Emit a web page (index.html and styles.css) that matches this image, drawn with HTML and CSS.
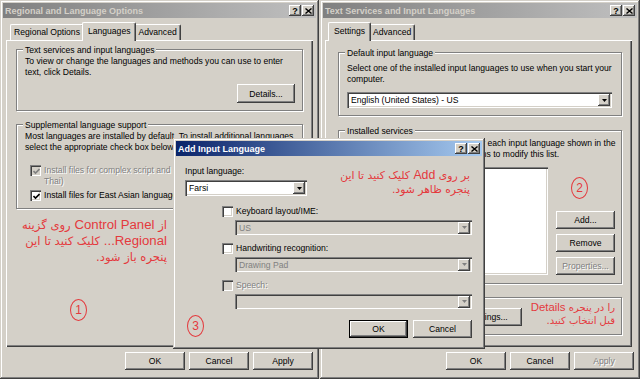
FILE: index.html
```html
<!DOCTYPE html>
<html lang="en">
<head>
    <meta charset="UTF-8">
    <title>Regional and Language Options</title>
    <link rel="stylesheet" href="styles.css">
</head>
<body>
<div class="desk">
    <div class="win win-left">
        <div class="title off">
            <span>Regional and Language Options</span>
            <span class="caps"><span class="cap">?</span><span class="cap"><svg width="7" height="6" viewBox="0 0 7 6"><path d="M0.5 0.5 L6.5 5.5 M6.5 0.5 L0.5 5.5" stroke="#000" stroke-width="1.4"/></svg></span></span>
        </div>
        <div class="tabs">
            <span class="tab">Regional Options</span>
            <span class="tab sel">Languages</span>
            <span class="tab">Advanced</span>
        </div>
        <div class="panel panel-left">
            <div class="group g-text">
                <div class="legend">Text services and input languages</div>
                <p class="txt">To view or change the languages and methods you can use to enter<br>text, click Details.</p>
                <div class="act"><span class="btn btn-details">Details...</span></div>
            </div>
            <div class="group g-supp">
                <div class="legend">Supplemental language support</div>
                <p class="txt">Most languages are installed by default. To install additional languages,<br>select the appropriate check box below.</p>
                <div class="chk dis chk-complex"><span class="box on"><svg width="7" height="7" viewBox="0 0 7 7"><path d="M0.5 3 L2.5 5 L6.5 1" stroke="#808080" stroke-width="1.6" fill="none"/></svg></span><span>Install files for complex script and right-to-left languages (including<br>Thai)</span></div>
                <div class="chk chk-asian"><span class="box on"><svg width="7" height="7" viewBox="0 0 7 7"><path d="M0.5 3 L2.5 5 L6.5 1" stroke="#000" stroke-width="1.6" fill="none"/></svg></span><span>Install files for East Asian languages</span></div>
            </div>
        </div>
        <div class="btnrow">
            <span class="btn">OK</span>
            <span class="btn">Cancel</span>
            <span class="btn">Apply</span>
        </div>
    </div>

    <div class="win win-right">
        <div class="title off">
            <span>Text Services and Input Languages</span>
            <span class="caps"><span class="cap">?</span><span class="cap"><svg width="7" height="6" viewBox="0 0 7 6"><path d="M0.5 0.5 L6.5 5.5 M6.5 0.5 L0.5 5.5" stroke="#000" stroke-width="1.4"/></svg></span></span>
        </div>
        <div class="tabs">
            <span class="tab sel">Settings</span>
            <span class="tab">Advanced</span>
        </div>
        <div class="panel panel-right">
            <div class="group g-default">
                <div class="legend">Default input language</div>
                <p class="txt">Select one of the installed input languages to use when you start your<br>computer.</p>
                <div class="combo combo-default"><span class="val">English (United States) - US</span><span class="arr"><svg width="5" height="3" viewBox="0 0 5 3"><path d="M0 0 H5 L2.5 3 Z" fill="#000"/></svg></span></div>
            </div>
            <div class="group g-installed">
                <div class="legend">Installed services</div>
                <p class="txt">Select the services that you want for each input language shown in the<br>list. Use the Add and Remove buttons to modify this list.</p>
                <div class="svc-row">
                    <div class="list"></div>
                    <div class="svc-btns">
                        <span class="btn">Add...</span>
                        <span class="btn">Remove</span>
                        <span class="btn dis">Properties...</span>
                    </div>
                </div>
            </div>
            <div class="group g-prefs">
                <div class="legend">Preferences</div>
                <div class="pref-row">
                    <span class="btn btn-wide">Language Bar...</span>
                    <span class="btn btn-wide">Key Settings...</span>
                </div>
            </div>
        </div>
        <div class="btnrow">
            <span class="btn">OK</span>
            <span class="btn">Cancel</span>
            <span class="btn dis">Apply</span>
        </div>
    </div>

    <div class="win add-dlg">
        <div class="title on">
            <span>Add Input Language</span>
            <span class="caps"><span class="cap">?</span><span class="cap"><svg width="7" height="6" viewBox="0 0 7 6"><path d="M0.5 0.5 L6.5 5.5 M6.5 0.5 L0.5 5.5" stroke="#000" stroke-width="1.4"/></svg></span></span>
        </div>
        <div class="dlg-body">
            <div class="lbl">Input language:</div>
            <div class="combo combo-lang"><span class="val">Farsi</span><span class="arr"><svg width="5" height="3" viewBox="0 0 5 3"><path d="M0 0 H5 L2.5 3 Z" fill="#000"/></svg></span></div>

            <div class="chk opt"><span class="box"></span><span>Keyboard layout/IME:</span></div>
            <div class="combo combo-opt off"><span class="val">US</span><span class="arr"><svg width="5" height="3" viewBox="0 0 5 3"><path d="M0 0 H5 L2.5 3 Z" fill="#808080"/></svg></span></div>

            <div class="chk opt"><span class="box"></span><span>Handwriting recognition:</span></div>
            <div class="combo combo-opt off"><span class="val">Drawing Pad</span><span class="arr"><svg width="5" height="3" viewBox="0 0 5 3"><path d="M0 0 H5 L2.5 3 Z" fill="#808080"/></svg></span></div>

            <div class="chk opt dis"><span class="box"></span><span>Speech:</span></div>
            <div class="combo combo-opt off"><span class="val"></span><span class="arr"><svg width="5" height="3" viewBox="0 0 5 3"><path d="M0 0 H5 L2.5 3 Z" fill="#808080"/></svg></span></div>

            <div class="dlg-btns">
                <span class="btn default">OK</span>
                <span class="btn">Cancel</span>
            </div>
        </div>
    </div>

    <!-- red notes -->
    <div class="note note-left" dir="rtl">از <span class="la">Control Panel</span> روی گزینه<br><span class="la">Regional...</span> کلیک کنید تا این<br>پنجره باز شود.</div>
    <div class="note note-add" dir="rtl">بر روی <span class="la">Add</span> کلیک کنید تا این<br>پنجره ظاهر شود.</div>
    <div class="note note-right">
        <div class="ln"><span class="la">Details</span> را در پنجره</div>
        <div class="ln" dir="rtl">قبل انتخاب کنید.</div>
    </div>

    <span class="mark mark-1">1</span>
    <span class="mark mark-2">2</span>
    <span class="mark mark-3">3</span>
</div>
</body>
</html>
```

FILE: styles.css
```css
body { margin: 0; background: #d4d0c8; font-family: "Liberation Sans", Arial, sans-serif; font-size: 8.6px; color: #000; }
.desk { position: relative; display: flex; width: 640px; height: 379px; overflow: hidden; }

/* window frame */
.win { box-sizing: border-box; display: flex; flex-direction: column; height: 379px; padding: 3px; background: #d4d0c8;
       box-shadow: inset -1px -1px #404040, inset 1px 1px #d4d0c8, inset -2px -2px #808080, inset 2px 2px #fff; }
.win-left { width: 319px; }
.win-right { width: 320px; margin-left: 1px; }

.title { display: flex; justify-content: space-between; align-items: center; height: 15px; padding: 0 2px 0 2px; font-weight: bold; font-size: 9px; }
.title.off { background: linear-gradient(to right, #808080, #c0c0c0); color: #d4d0c8; }
.title.on { background: linear-gradient(to right, #0a246a, #a6caf0); color: #fff; }
.caps { display: flex; gap: 1px; }
.cap { display: flex; align-items: center; justify-content: center; width: 12px; height: 11px; background: #d4d0c8; color: #000; font-size: 9px;
       box-shadow: inset -1px -1px #404040, inset 1px 1px #fff, inset -2px -2px #808080; }

/* tabs */
.tabs { display: flex; align-items: flex-end; height: 18px; margin: 4px 0 0 7px; }
.tab { position: relative; height: 16px; line-height: 15px; padding: 0 3px; box-sizing: border-box; white-space: nowrap;
       border-top: 1px solid #fff; border-left: 1px solid #fff; border-right: 1px solid #404040; border-radius: 2px 2px 0 0;
       box-shadow: inset -1px 0 #808080; }
.tab.sel { z-index: 1; height: 19px; margin: 0 -2px -1px; padding: 0 5px; line-height: 17px; background: #d4d0c8; }

.panel { box-sizing: border-box; width: 307px; height: 307px;
         box-shadow: inset 1px 1px #fff, inset -1px -1px #404040, inset -2px -2px #808080; }
.panel-left { margin-left: 3px; padding: 9px 10px 0 10px; }
.panel-right { margin-left: 2px; padding: 12px 10px 0 13px; }

/* group boxes */
.group { border: 1px solid #808080; box-shadow: inset 1px 1px #fff, 1px 1px #fff; }
.legend { width: fit-content; margin: -5px 0 0 6px; padding: 0 2px; line-height: 11px; background: #d4d0c8; white-space: nowrap; }
.txt { margin: 0; padding-left: 8px; line-height: 11px; white-space: nowrap; }

.g-text { padding-bottom: 7px; }
.act { display: flex; justify-content: flex-end; margin: 6px 7px 0 0; }
.g-supp { margin-top: 13px; padding-bottom: 7px; }

.chk { display: flex; gap: 3px; line-height: 11px; white-space: nowrap; }
.chk.dis { color: #808080; text-shadow: 1px 1px #fff; }
.chk-complex { margin: 12px 0 0 13px; }
.chk-asian { margin: 3px 0 0 13px; }
.box { box-sizing: border-box; display: flex; align-items: center; justify-content: center; flex: none; width: 11px; height: 11px; background: #fff;
       box-shadow: inset 1px 1px #808080, inset 2px 2px #404040, inset -1px -1px #fff, inset -2px -2px #d4d0c8; }
.chk.dis .box { background: #d4d0c8; }
.box svg { margin: 1px 0 0 1px; }

/* buttons */
.btn { box-sizing: border-box; display: flex; align-items: center; justify-content: center; width: 60px; height: 18px; white-space: nowrap;
       box-shadow: inset -1px -1px #404040, inset 1px 1px #fff, inset -2px -2px #808080; }
.btn.dis { color: #808080; text-shadow: 1px 1px #fff; }
.btn.default { border: 1px solid #000; }
.btn-details { width: 58px; height: 19px; }
.btn-wide { width: 84px; }
.btnrow { display: flex; justify-content: flex-end; gap: 4px; margin: 5px 3px 0 0; }

/* right dialog */
.g-default { padding-bottom: 7px; }
.g-default .txt { margin-top: 4px; }
.combo { box-sizing: border-box; display: flex; align-items: center; justify-content: space-between; height: 16px; padding: 2px; background: #fff;
         box-shadow: inset 1px 1px #808080, inset 2px 2px #404040, inset -1px -1px #fff, inset -2px -2px #d4d0c8; }
.combo .val { padding-left: 2px; white-space: nowrap; }
.combo .arr { display: flex; align-items: center; justify-content: center; width: 12px; height: 12px; background: #d4d0c8;
              box-shadow: inset -1px -1px #404040, inset 1px 1px #fff, inset -2px -2px #808080; }
.combo.off { background: #d4d0c8; color: #808080; }
.combo-default { margin: 7px 9px 0 8px; }

.g-installed { margin-top: 14px; padding-bottom: 8px; }
.g-installed .txt { margin-top: 1px; }
.svc-row { display: flex; align-items: flex-end; gap: 8px; margin: 7px 6px 0 8px; }
.list { flex: 1; height: 108px; background: #fff;
        box-shadow: inset 1px 1px #808080, inset 2px 2px #404040, inset -1px -1px #fff, inset -2px -2px #d4d0c8; }
.svc-btns { display: flex; flex-direction: column; gap: 5px; }
.svc-btns .btn { width: 59px; }

.g-prefs { margin-top: 13px; padding-bottom: 8px; }
.pref-row { display: flex; gap: 7px; margin: 4px 0 0 8px; }

/* add input language dialog */
.add-dlg { position: absolute; left: 173px; top: 138px; width: 312px; height: 211px; z-index: 2; }
.dlg-body { display: flex; flex-direction: column; padding: 10px 10px 0 9px; }
.lbl { line-height: 11px; }
.combo-lang { width: 122px; height: 16px; margin-top: 3px; }
.chk.opt { margin: 10px 0 0 37px; }
.combo-opt + .chk.opt { margin-top: 8px; }
.combo-opt { height: 15px; margin: 3px 0 0 50px; }
.dlg-btns { display: flex; justify-content: flex-end; gap: 5px; margin-top: 11px; }
.dlg-btns .btn { width: 59px; }

/* red annotations */
.note { position: absolute; z-index: 3; white-space: nowrap; text-align: right; color: #e4393d; font-family: "DejaVu Sans", sans-serif; }
.note .la { font-family: "Liberation Sans", Arial, sans-serif; font-size: 1.14em; }
.note-left { left: 10px; top: 217px; width: 157px; font-size: 11.6px; line-height: 16px; }
.note-add { left: 290px; top: 168px; width: 180px; font-size: 10.8px; line-height: 14px; }
.note-right { left: 500px; top: 301px; width: 115px; font-size: 10px; line-height: 13px; }

.mark { position: absolute; z-index: 3; box-sizing: border-box; display: flex; align-items: center; justify-content: center; width: 17px; height: 22px;
        border: 1px solid #e4393d; border-radius: 50%; color: #e4393d; font-size: 12px; }
.mark-1 { left: 70px; top: 299px; }
.mark-2 { left: 571px; top: 177px; }
.mark-3 { left: 187px; top: 315px; }
```
